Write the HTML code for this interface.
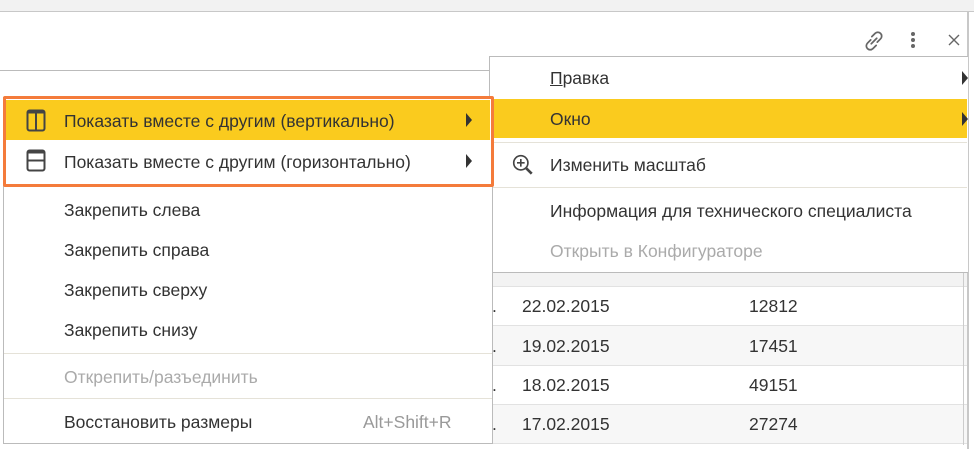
<!DOCTYPE html>
<html><head><meta charset="utf-8"><style>
*{margin:0;padding:0;box-sizing:border-box}
body{width:974px;height:449px;overflow:hidden;background:#fff;font-family:"Liberation Sans",sans-serif;font-size:17.5px;color:#333;position:relative}
.abs{position:absolute}
.txt{position:absolute;white-space:nowrap;line-height:20px}
</style></head><body>
<div class="abs" style="left:0;top:0;width:974px;height:12px;background:#f2f2f2;border-bottom:1px solid #c8c8c8"></div>
<div class="abs" style="left:967px;top:12px;width:2px;height:437px;background:#c8c8c8"></div>
<div class="abs" style="left:0;top:70px;width:490px;height:1px;background:#bbb"></div>
<svg class="abs" style="left:862px;top:29px" width="24" height="24" viewBox="0 0 22 22" fill="none" stroke="#666" stroke-width="1.6" stroke-linecap="round"><path d="M9 7l3-3a3.5 3.5 0 0 1 5 5l-3 3"/><path d="M13 15l-3 3a3.5 3.5 0 0 1-5-5l3-3"/><path d="M8.5 13.5l5-5"/></svg>
<div class="abs" style="left:911px;top:32px;width:4px;height:4px;border-radius:2px;background:#666;box-shadow:0 6px 0 #666,0 12px 0 #666"></div>
<svg class="abs" style="left:948px;top:34px" width="12" height="12" viewBox="0 0 12 12" stroke="#666" stroke-width="1.4"><path d="M1 1l10 10M11 1L1 11"/></svg>
<div class="abs" style="left:492px;top:273px;width:475px;height:14px;background:#f3f3f3;border-bottom:1px solid #e2e2e2"></div>
<div class="abs" style="left:492px;top:287px;width:475px;height:39px;background:#fff;border-bottom:1px solid #e2e2e2"></div>
<div class="abs" style="left:492px;top:326px;width:475px;height:40px;background:#f7f7f7;border-bottom:1px solid #e2e2e2"></div>
<div class="abs" style="left:492px;top:366px;width:475px;height:39px;background:#fff;border-bottom:1px solid #e2e2e2"></div>
<div class="abs" style="left:492px;top:405px;width:475px;height:39px;background:#f7f7f7;border-bottom:1px solid #e2e2e2"></div>
<div class="abs" style="left:963px;top:273px;width:1px;height:172px;background:#ccc"></div>
<div class="txt" style="left:522px;top:296px">22.02.2015</div><div class="txt" style="left:749px;top:296px">12812</div>
<div class="txt" style="left:522px;top:336px">19.02.2015</div><div class="txt" style="left:749px;top:336px">17451</div>
<div class="txt" style="left:522px;top:375px">18.02.2015</div><div class="txt" style="left:749px;top:375px">49151</div>
<div class="txt" style="left:522px;top:414px">17.02.2015</div><div class="txt" style="left:749px;top:414px">27274</div>
<div class="txt" style="left:492px;top:296px">.</div><div class="txt" style="left:492px;top:336px">.</div><div class="txt" style="left:492px;top:375px">.</div><div class="txt" style="left:492px;top:414px">.</div>
<div class="abs" style="left:489px;top:56px;width:479px;height:217px;background:#fff;border:1px solid #bbb;border-right:none"></div>
<div class="txt" style="left:550px;top:68px"><u>П</u>равка</div>
<div class="abs" style="left:962px;top:71px;width:0;height:0;border-left:6px solid #333;border-top:7px solid transparent;border-bottom:7px solid transparent"></div>
<div class="abs" style="left:490px;top:99px;width:477px;height:39px;background:#facb1e"></div>
<div class="txt" style="left:550px;top:109px">Окно</div>
<div class="abs" style="left:962px;top:112px;width:0;height:0;border-left:6px solid #333;border-top:7px solid transparent;border-bottom:7px solid transparent"></div>
<div class="abs" style="left:490px;top:142px;width:477px;height:1px;background:#e5e2d8"></div>
<svg class="abs" style="left:511px;top:153px" width="24" height="24" viewBox="0 0 22 22" fill="none" stroke="#444" stroke-width="1.5"><circle cx="9" cy="9" r="6.5"/><path d="M9 5.5v7M5.5 9h7"/><path d="M14 14l5 5" stroke-width="2.4"/></svg>
<div class="txt" style="left:550px;top:155px">Изменить масштаб</div>
<div class="abs" style="left:490px;top:187px;width:477px;height:1px;background:#e5e2d8"></div>
<div class="txt" style="left:550px;top:201px">Информация для технического специалиста</div>
<div class="txt" style="left:550px;top:241px;color:#aaa">Открыть в Конфигураторе</div>
<div class="abs" style="left:3px;top:97px;width:490px;height:347px;background:#fff;border:1px solid #bbb"></div>
<div class="abs" style="left:6px;top:100px;width:484px;height:40px;background:#facb1e"></div>
<svg class="abs" style="left:26px;top:109px" width="20" height="23" viewBox="0 0 20 23" fill="none" stroke="#444" stroke-width="2"><rect x="1.5" y="1.5" width="17" height="20" rx="2"/><path d="M10 1.5v20"/><path d="M1.5 3h17" stroke-width="3"/></svg>
<div class="txt" style="left:64px;top:111px">Показать вместе с другим (вертикально)</div>
<div class="abs" style="left:466px;top:113px;width:0;height:0;border-left:6px solid #333;border-top:7px solid transparent;border-bottom:7px solid transparent"></div>
<svg class="abs" style="left:26px;top:149px" width="20" height="23" viewBox="0 0 20 23" fill="none" stroke="#444" stroke-width="2"><rect x="1.5" y="1.5" width="17" height="20" rx="2"/><path d="M1.5 11.5h17"/><path d="M1.5 3h17" stroke-width="3"/></svg>
<div class="txt" style="left:64px;top:152px">Показать вместе с другим (горизонтально)</div>
<div class="abs" style="left:466px;top:154px;width:0;height:0;border-left:6px solid #333;border-top:7px solid transparent;border-bottom:7px solid transparent"></div>
<div class="abs" style="left:3px;top:96px;width:491px;height:91px;border:3px solid #f47b3b;border-radius:2px"></div>
<div class="txt" style="left:64px;top:200px">Закрепить слева</div>
<div class="txt" style="left:64px;top:240px">Закрепить справа</div>
<div class="txt" style="left:64px;top:280px">Закрепить сверху</div>
<div class="txt" style="left:64px;top:320px">Закрепить снизу</div>
<div class="abs" style="left:4px;top:353px;width:488px;height:1px;background:#e5e2d8"></div>
<div class="txt" style="left:64px;top:367px;color:#aaa">Открепить/разъединить</div>
<div class="abs" style="left:4px;top:398px;width:488px;height:1px;background:#e5e2d8"></div>
<div class="txt" style="left:64px;top:412px">Восстановить размеры</div>
<div class="txt" style="left:363px;top:412px;color:#999">Alt+Shift+R</div>
</body></html>
